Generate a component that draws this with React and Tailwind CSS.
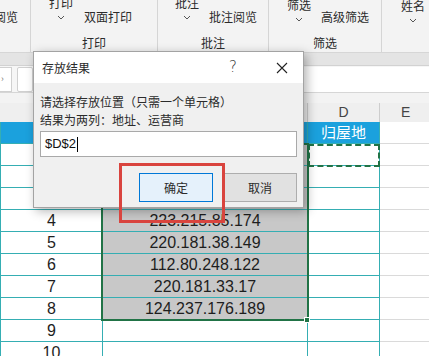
import React from "react";

const rows = [
  { n: 1, ip: "183.232.231.174" },
  { n: 2, ip: "39.156.66.18" },
  { n: 3, ip: "14.215.177.38" },
  { n: 4, ip: "223.215.85.174" },
  { n: 5, ip: "220.181.38.149" },
  { n: 6, ip: "112.80.248.122" },
  { n: 7, ip: "220.181.33.17" },
  { n: 8, ip: "124.237.176.189" },
  { n: 9, ip: "" },
  { n: 10, ip: "" },
];

const Chevron = () => (
  <svg width="8" height="5" viewBox="0 0 8 5" className="mt-[4px]">
    <path d="M1 1 L4 4 L7 1" fill="none" stroke="#555" strokeWidth="1" />
  </svg>
);

const BigButton = ({ label, className = "" }) => (
  <div className={`flex flex-col items-center w-[24px] ${className}`}>
    <span className="leading-[16px] -mt-[5px]">{label}</span>
    <Chevron />
  </div>
);

const App = () => {
  return (
    <div
      className="relative w-[429px] h-[356px] overflow-hidden bg-white text-[12px] text-[#2b2b2b]"
      style={{ fontFamily: '"Noto Sans CJK SC", "Liberation Sans", sans-serif' }}
    >
      {/* Ribbon */}
      <div className="flex h-[53px] bg-[#f3f3f3] border-b border-[#d6d6d6]">
        <div className="w-[31px] flex flex-col border-r border-[#d5d5d5] overflow-hidden">
          <div className="h-[35px] flex">
            <span className="-ml-[6px] mt-[9px] leading-[16px] whitespace-nowrap">阅览</span>
          </div>
        </div>

        <div className="w-[127px] flex flex-col border-r border-[#d5d5d5]">
          <div className="h-[35px] flex items-start pl-[18px]">
            <BigButton label="打印" />
            <span className="ml-[11px] mt-[9px] leading-[16px]">双面打印</span>
          </div>
          <div className="text-center leading-[16px]">打印</div>
        </div>

        <div className="w-[111px] flex flex-col border-r border-[#d5d5d5]">
          <div className="h-[35px] flex items-start pl-[17px]">
            <BigButton label="批注" />
            <span className="ml-[10px] mt-[9px] leading-[16px]">批注阅览</span>
          </div>
          <div className="text-center leading-[16px]">批注</div>
        </div>

        <div className="w-[113px] flex flex-col border-r border-[#d5d5d5]">
          <div className="h-[35px] flex items-start pl-[18px]">
            <BigButton label="筛选" className="pt-[2px]" />
            <span className="ml-[10px] mt-[9px] leading-[16px]">高级筛选</span>
          </div>
          <div className="text-center leading-[16px]">筛选</div>
        </div>

        <div className="flex-1 flex flex-col">
          <div className="h-[35px] flex items-start pl-[19px]">
            <BigButton label="姓名" className="pt-[3px]" />
          </div>
        </div>
      </div>

      {/* band under ribbon */}
      <div className="h-[13px] bg-[#e4e4e4] border-b border-[#d2d2d2]" />

      {/* formula bar */}
      <div className="h-[27px] bg-[#f6f6f6] flex items-center gap-[5px] border-b border-[#d6d6d6]">
        <div className="w-[12px] h-[25px] bg-white border border-l-0 border-[#d0d0d0] flex items-center">
          <span className="text-[9px] text-[#777] ml-[1px]">›</span>
        </div>
        <div className="w-[16px] h-[25px] bg-white border border-[#d0d0d0] rounded-[2px]" />
        <div className="flex-1 h-[25px] bg-white border-l border-[#d0d0d0]" />
      </div>
      <div className="h-[10px] bg-[#f3f3f3]" />

      {/* column headers */}
      <div className="flex h-[19px] bg-[#efefef] text-[#444] text-[14px] leading-[19px]">
        <div className="w-[103px] border-r border-[#cdcdcd]" />
        <div className="w-[205px] border-r border-[#cdcdcd] text-center">C</div>
        <div
          className="w-[72px] border-r border-[#cdcdcd] text-center"
          style={{ fontFamily: '"Liberation Sans", sans-serif' }}
        >
          D
        </div>
        <div className="flex-1 pl-[21px]" style={{ fontFamily: '"Liberation Sans", sans-serif' }}>
          E
        </div>
      </div>

      {/* grid */}
      <div className="flex h-[22px]">
        <div className="w-[103px] bg-[#1ba1dd] border-l border-r border-b border-[#35aeb3]" />
        <div className="w-[205px] bg-[#1ba1dd] border-r border-b border-[#35aeb3]" />
        <div className="w-[72px] bg-[#1ba1dd] border-r border-b border-[#35aeb3] flex items-center justify-center text-white text-[15px]">
          归屋地
        </div>
        <div className="flex-1 border-b border-[#dadada]" />
      </div>
      {rows.map((r) => (
        <div
          key={r.n}
          className="flex h-[22px] text-[16px] text-[#1e1e1e]"
          style={{ fontFamily: '"Liberation Sans", sans-serif' }}
        >
          <div className="w-[103px] border-l border-r border-b border-[#35aeb3] flex items-center justify-center">
            {r.n}
          </div>
          <div
            className={`w-[205px] border-r border-b border-[#35aeb3] flex items-center justify-center ${
              r.ip ? "bg-[#c8c8c8]" : "bg-white"
            }`}
          >
            {r.ip}
          </div>
          <div className="w-[72px] border-r border-b border-[#35aeb3]" />
          <div className="flex-1 border-b border-[#dadada]" />
        </div>
      ))}

      {/* selection C2:C9 */}
      <div className="absolute left-[101px] top-[143px] w-[208px] h-[178px] border-2 border-[#217346]" />
      <div className="absolute left-[304px] top-[317px] w-[6px] h-[6px] bg-[#217346] border border-white" />

      {/* copy marquee D2 */}
      <div className="absolute left-[308px] top-[144px] w-[72px] h-[23px] border-2 border-dashed border-[#217346]" />

      {/* dialog */}
      <div className="absolute left-[33px] top-[51px] w-[271px] h-[157px] bg-[#f0f0f0] border border-[#a3a3a3] shadow-[3px_3px_10px_rgba(0,0,0,0.3)] flex flex-col">
        <div className="h-[31px] bg-white flex items-center pl-[8px] shrink-0">
          <span className="flex-1 leading-[16px]">存放结果</span>
          <span
            className="text-[15px] text-[#333] w-[14px] text-center mr-[36px]"
            style={{ fontFamily: '"DejaVu Sans", sans-serif', fontWeight: 300 }}
          >
            ?
          </span>
          <svg width="12" height="12" viewBox="0 0 12 12" className="mr-[15px]">
            <path d="M1 1 L11 11 M11 1 L1 11" stroke="#222" strokeWidth="1.1" />
          </svg>
        </div>
        <div className="flex-1 px-[6px] pt-[10px]">
          <div className="leading-[18px]">请选择存放位置（只需一个单元格）</div>
          <div className="leading-[18px]">结果为两列：地址、运营商</div>
          <div className="mt-[2px] h-[26px] bg-white border border-[#a9a9a9] flex items-center pl-[4px] text-[13px] text-[#111]">
            <span style={{ fontFamily: '"Liberation Sans", sans-serif' }}>$D$2</span>
            <span className="w-px h-[15px] bg-black ml-[1px]" />
          </div>
          <div className="flex justify-end gap-[10px] mt-[16px]">
            <button className="w-[74px] h-[29px] bg-[#e5f1fb] border border-[#0078d7] text-[12px]">
              确定
            </button>
            <button className="w-[74px] h-[29px] bg-[#e1e1e1] border border-[#adadad] text-[12px]">
              取消
            </button>
          </div>
        </div>
      </div>

      {/* red highlight */}
      <div className="absolute left-[119px] top-[163px] w-[106px] h-[60px] border-[3px] border-[#d9443e]" />
    </div>
  );
};

export default App;
